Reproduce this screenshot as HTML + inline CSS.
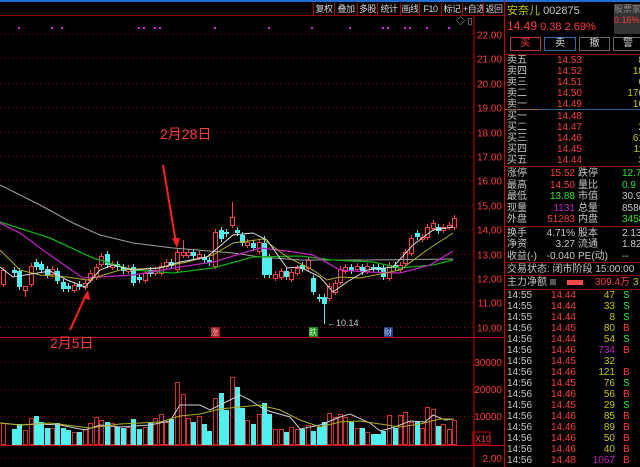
<!DOCTYPE html><html><head><meta charset="utf-8"><style>
*{margin:0;padding:0;box-sizing:border-box}
body{width:640px;height:467px;background:#000;overflow:hidden;position:relative;font-family:"Liberation Sans","Noto Sans CJK SC",sans-serif;font-size:10px;color:#ccc}
.a{position:absolute;white-space:nowrap;line-height:11px}
.r{color:#ff3b3b}.g{color:#2ee82e}.y{color:#c8c800}.w{color:#c8c8c8}.p{color:#c020c0}
.tb{position:absolute;top:3px;height:13px;border-left:1px solid #a00;color:#ddd;font-size:9px;line-height:13px;text-align:center;white-space:nowrap;overflow:hidden;letter-spacing:-0.5px}
.rt{text-align:right}
</style></head><body>
<div class="a" style="left:0;top:0;width:640px;height:2px;background:#1d6fd6"></div>
<div class="a" style="left:0;top:15px;width:505px;height:1px;background:#8a0000"></div>
<div class="tb" style="left:313px;width:21px">复权</div>
<div class="tb" style="left:334px;width:23px">叠加</div>
<div class="tb" style="left:357px;width:20px">多股</div>
<div class="tb" style="left:377px;width:23px">统计</div>
<div class="tb" style="left:400px;width:19px">画线</div>
<div class="tb" style="left:419px;width:22px">F10</div>
<div class="tb" style="left:441px;width:21px">标记</div>
<div class="tb" style="left:462px;width:21px">+自选</div>
<div class="tb" style="left:483px;width:22px;border-right:1px solid #a00">返回</div>
<svg class="a" style="left:0;top:0" width="505" height="467" id="ch">
<line x1="474" y1="16" x2="474" y2="467" stroke="#c00" stroke-width="1"/>
<line x1="504.5" y1="0" x2="504.5" y2="467" stroke="#c00" stroke-width="1"/>
<line x1="0" y1="337.5" x2="505" y2="337.5" stroke="#c00"/>
<line x1="0" y1="445.5" x2="505" y2="445.5" stroke="#c00"/>
<g id="grid" stroke="#8a0000" stroke-dasharray="1,3"></g>
<g id="cd"></g>
<rect x="473" y="432" width="17" height="12" fill="none" stroke="#c00"/>
<text x="475" y="442" fill="#ff4040" font-size="9">X10</text>
<g fill="#ff3b3b" font-size="10" text-anchor="end" id="axis"></g>
<text x="456" y="24" fill="#aaa" font-size="9">◇ ▯</text>
</svg>
<div class="a r" style="left:160px;top:126px;font-size:14px;line-height:16px">2月28日</div>
<div class="a r" style="left:50px;top:335px;font-size:14px;line-height:16px">2月5日</div>
<div class="a" style="left:211px;top:327px;width:9px;height:10px;background:#a02020;font-size:8px;color:#fbb">涨</div>
<div class="a" style="left:309px;top:327px;width:9px;height:10px;background:#1a8a1a;font-size:8px;color:#cfc">跌</div>
<div class="a" style="left:384px;top:327px;width:9px;height:10px;background:#20407a;font-size:8px;color:#ccf">财</div>
<div class="a w" style="left:327px;top:318px;font-size:9px">←10.14</div>

<div class="a y" style="left:507px;top:6px;font-size:11px">安奈儿 <span class="w">002875</span></div>
<div class="a r" style="left:507px;top:21px;font-size:11px"><b style="font-weight:normal;font-size:12px">14.49</b> 0.38 2.69%</div>
<div class="a" style="left:614px;top:4px;width:26px;height:30px;background:#333;color:#888;font-size:9px;overflow:hidden">股票家校<br><span class="r">0.16%</span></div>
<div class="a r" style="left:510px;top:37px;width:31px;height:14px;border:1px solid #c03030;text-align:center;line-height:12px">买</div>
<div class="a" style="left:544px;top:37px;width:32px;height:14px;border:1px solid #2a6ab0;text-align:center;line-height:12px;color:#ddd">卖</div>
<div class="a" style="left:579px;top:37px;width:31px;height:14px;border:1px solid #666;text-align:center;line-height:12px;color:#ddd">撤</div>
<div class="a" style="left:613px;top:37px;width:30px;height:14px;border:1px solid #666;text-align:center;line-height:12px;color:#ddd">警</div>
<div class="a" style="left:505px;top:54px;width:135px;height:1px;background:#8a0000"></div>
<div class="a" style="left:505px;top:109px;width:36px;height:1px;background:#8a6a30"></div>
<div class="a" style="left:541px;top:109px;width:99px;height:1px;background:#2a5a90"></div>
<div class="a" style="left:505px;top:166px;width:135px;height:1px;background:#8a0000"></div>
<div class="a" style="left:505px;top:226px;width:135px;height:1px;background:#8a0000"></div>
<div class="a" style="left:505px;top:262px;width:135px;height:1px;background:#8a0000"></div>
<div class="a" style="left:505px;top:275px;width:135px;height:1px;background:#8a0000"></div>
<div class="a" style="left:505px;top:289px;width:135px;height:1px;background:#8a0000"></div>
<div class="a w" style="left:507px;top:264px">交易状态: 闭市阶段 15:00:00</div>
<div class="a w" style="left:507px;top:277px">主力净额 <span style="display:inline-block;width:6px;height:6px;background:#555"></span></div>
<div class="a" style="left:567px;top:280px;width:16px;height:5px;background:#ff4a4a"></div>
<div class="a r" style="left:595px;top:277px">309.4万 <span class="y">3</span></div>
<script>
function h(s){document.body.insertAdjacentHTML('beforeend',s)}
var ob=[['卖五','14.53','8'],['卖四','14.52','18'],['卖三','14.51','6'],['卖二','14.50','176'],['卖一','14.49','16'],['买一','14.48',''],['买二','14.47','2'],['买三','14.46','61'],['买四','14.45','11'],['买五','14.44','3']];
ob.forEach(function(o,i){var y=55+i*11+(i>4?1:0);h('<div class="a w" style="left:507px;top:'+y+'px">'+o[0]+'</div><div class="a r rt" style="left:540px;width:42px;top:'+y+'px">'+o[1]+'</div><div class="a y rt" style="left:600px;width:44px;top:'+y+'px">'+o[2]+'</div>')});
var st=[['涨停','15.52','r','跌停','12.7','g'],['最高','14.50','r','量比','0.9','g'],['最低','13.88','g','市值','30.9','w'],['现量','1131','p','总量','8586','w'],['外盘','51283','r','内盘','3458','g'],['换手','4.71%','w','股本','2.13','w'],['净资','3.27','w','流通','1.82','w'],['收益(-)','-0.040','w','PE(动)','--','w']];
st.forEach(function(o,i){var y=168+i*11.5+(i>4?2:0);h('<div class="a w" style="left:507px;top:'+y+'px">'+o[0]+'</div><div class="a '+o[2]+' rt" style="left:535px;width:40px;top:'+y+'px">'+o[1]+'</div><div class="a w" style="left:578px;top:'+y+'px">'+o[3]+'</div><div class="a '+o[5]+'" style="left:622px;top:'+y+'px">'+o[4]+'</div>')});
var tk=[['14:55','14.44','47','S'],['14:55','14.44','33','S'],['14:55','14.44','8','S'],['14:56','14.45','80','B'],['14:56','14.44','54','S'],['14:56','14.46','734','B'],['14:56','14.45','32',''],['14:56','14.46','121','B'],['14:56','14.45','76','S'],['14:56','14.46','56','B'],['14:56','14.45','29','S'],['14:56','14.46','85','B'],['14:56','14.46','89','B'],['14:56','14.46','50','B'],['14:56','14.46','40','B'],['14:56','14.48','1067','B']];
tk.forEach(function(o,i){var y=290+i*11;var vc=(+o[2]>500)?'p':'y';h('<div class="a w" style="left:507px;top:'+y+'px">'+o[0]+'</div><div class="a r rt" style="left:540px;width:36px;top:'+y+'px">'+o[1]+'</div><div class="a '+vc+' rt" style="left:585px;width:30px;top:'+y+'px">'+o[2]+'</div><div class="a '+(o[3]=='S'?'g':'r')+'" style="left:623px;top:'+y+'px">'+o[3]+'</div>')});
var NS='http://www.w3.org/2000/svg';
function el(p,t,a){var e=document.createElementNS(NS,t);for(var k in a)e.setAttribute(k,a[k]);p.appendChild(e);return e}
var gr=document.getElementById('grid'),cd=document.getElementById('cd'),ax=document.getElementById('axis');
var pr=['22.00','21.00','20.00','19.00','18.00','17.00','16.00','15.00','14.00','13.00','12.00','11.00','10.00'];
pr.forEach(function(p,i){var y=Math.round(34+i*24.4)+.5;el(gr,'line',{x1:0,y1:y,x2:474,y2:y});el(ax,'text',{x:502,y:y+4}).textContent=p});
[[362,'30000'],[389,'20000'],[416,'10000'],[458,'2.00']].forEach(function(a){el(gr,'line',{x1:0,y1:a[0]+.5,x2:474,y2:a[0]+.5});el(ax,'text',{x:502,y:a[0]+4}).textContent=a[1]});
[19,52,62,139,144,155,160,215,269,312,350,383,388,405,410,427,449].forEach(function(x){el(cd,'rect',{x:x-1,y:27,width:2,height:2,fill:'#e020e0'})});
var C=[[3,270,284,'r'],[14,270,273,'c'],[19,271,287,'c'],[25,286,290,'r',297],[31,266,284,'r'],[36,262,267,'c'],[41,264,270,'c'],[47,269,275,'c'],[52,269,274,'r'],[57,271,281,'c'],[63,282,289,'c'],[68,286,289,'c'],[74,285,290,'r'],[79,284,287,'c'],[85,283,287,'r'],[90,273,280,'r'],[96,267,277,'r'],[101,256,264,'r'],[107,254,265,'c'],[112,264,267,'r'],[117,264,267,'c'],[123,267,271,'c'],[128,268,271,'r'],[133,267,283,'c'],[139,277,280,'c'],[145,273,280,'r'],[150,270,274,'c'],[155,270,273,'r'],[161,266,273,'r'],[166,262,266,'r'],[171,262,266,'c'],[177,252,269,'r'],[183,252,255,'r',240],[188,252,255,'r'],[193,252,256,'c'],[199,254,257,'r'],[204,257,260,'c'],[209,260,263,'c'],[215,232,266,'r'],[221,230,239,'c'],[226,232,234,'c'],[232,217,225,'r',202],[237,230,233,'c'],[242,235,243,'c'],[247,242,245,'r'],[253,243,248,'c'],[259,242,251,'r'],[264,243,275,'c',236],[269,257,275,'c'],[275,274,278,'r'],[281,271,277,'r'],[286,271,277,'c'],[291,272,279,'r'],[297,268,273,'r'],[302,265,269,'c'],[308,260,268,'r'],[313,278,292,'c'],[319,297,299,'c'],[324,297,304,'c',0,324],[329,286,298,'r'],[335,283,292,'r'],[340,269,282,'r'],[345,267,271,'r'],[351,267,271,'c'],[357,266,269,'r'],[362,267,272,'c'],[367,266,271,'r'],[373,267,269,'c'],[378,267,270,'c'],[383,268,277,'c'],[389,265,278,'r'],[395,265,268,'c'],[400,265,269,'r'],[405,252,263,'r'],[411,238,253,'r'],[417,233,237,'c'],[422,237,239,'r'],[427,227,237,'r'],[433,223,228,'r'],[438,227,231,'c'],[443,227,230,'r'],[449,225,227,'r'],[454,218,227,'r']];
var V={3:423,7:425,14:429,19:424,25:430,31:418,36:416,41:422,47:428,52:428,57:423,63:428,68:430,74:432,79:432,85:429,90:423,96:417,101:420,107:422,112:423,117:427,123:428,128:427,133:419,139:429,145:427,150:423,155:418,161:414,166:422,171:419,177:382,183:394,188:418,193:422,199:416,204:424,209:431,215:398,221:393,226:410,232:377,237:387,242:408,247:420,253:424,259:414,264:403,269:414,275:429,281:429,286:432,291:427,297:429,302:429,308:425,313:431,319:427,324:422,329:413,335:417,340:414,345:417,351:422,357:428,362:428,367:432,373:434,378:434,383:431,389:415,395:428,400:415,405:412,411:422,417:422,422:428,427:407,433:409,438:426,443:424,449:429,454:420};
C.forEach(function(c){var x=c[0],col=c[3]=='r'?'#ff4040':'#50f0f0';var wt=c[4]||c[1]-3,wb=c[5]||c[2]+3;
el(cd,'line',{x1:x+.5,y1:wt,x2:x+.5,y2:c[1],stroke:col});el(cd,'line',{x1:x+.5,y1:c[2],x2:x+.5,y2:wb,stroke:col});
if(c[3]=='r')el(cd,'rect',{x:x-1.5,y:c[1]+.5,width:4,height:Math.max(1,c[2]-c[1]),fill:'#000',stroke:col});else el(cd,'rect',{x:x-2,y:c[1],width:5,height:Math.max(1,c[2]-c[1]),fill:col});
var vt=V[x]||425;if(c[3]=='r')el(cd,'rect',{x:x-1.5,y:vt+.5,width:4,height:444-vt,fill:'none',stroke:'#d03030'});else el(cd,'rect',{x:x-2,y:vt,width:5,height:445-vt,fill:col})});
function pl(pts,col,w){el(cd,'polyline',{points:pts,fill:'none',stroke:col,'stroke-width':w||1})}
pl('0,185 40,205 73,223 100,235 133,243 173,248 233,253 260,257 300,260 367,260 453,259','#a0a0a0');
pl('0,222 50,238 93,258 133,270 173,273 213,268 253,257 300,256 333,260 373,262 400,268 433,265 453,260','#10b010',1.3);
pl('0,223 20,233 47,253 83,278 133,275 180,267 213,262 260,248 287,251 313,255 340,270 367,272 400,273 430,265 453,251','#c020c0',1.3);
pl('0,250 20,270 40,275 67,277 87,280 120,270 157,268 187,262 213,255 233,243 263,239 287,257 313,270 327,280 340,277 360,278 400,270 427,250 453,233','#b0b020');
pl('0,267 13,277 50,271 67,280 85,287 100,270 113,265 133,270 160,268 180,262 207,257 233,235 253,233 267,240 287,268 300,267 320,277 333,292 347,282 367,270 393,267 413,245 433,230 453,227','#e0e0e0');
pl('0,423 20,425 40,424 60,425 85,430 100,425 120,427 150,425 170,421 180,405 200,405 210,410 230,400 240,395 250,400 265,410 290,417 300,429 320,425 340,417 350,414 370,423 380,431 395,427 410,421 425,422 433,415 445,420 454,419','#d0d0d0');
pl('0,423 20,425 50,423 90,428 120,424 160,422 180,416 200,414 220,409 240,407 260,405 280,410 300,420 320,427 340,422 360,421 380,424 400,427 420,424 440,419 454,419','#b0b020');
el(cd,'polyline',{points:'163,165 176,243',fill:'none',stroke:'#ff2020','stroke-width':2});el(cd,'polygon',{points:'172,238 180,238 177,248',fill:'#ff2020'});
el(cd,'polyline',{points:'70,330 86,295',fill:'none',stroke:'#ff2020','stroke-width':2});el(cd,'polygon',{points:'83,298 90,300 88,290',fill:'#ff2020'});
</script>
</body></html>
